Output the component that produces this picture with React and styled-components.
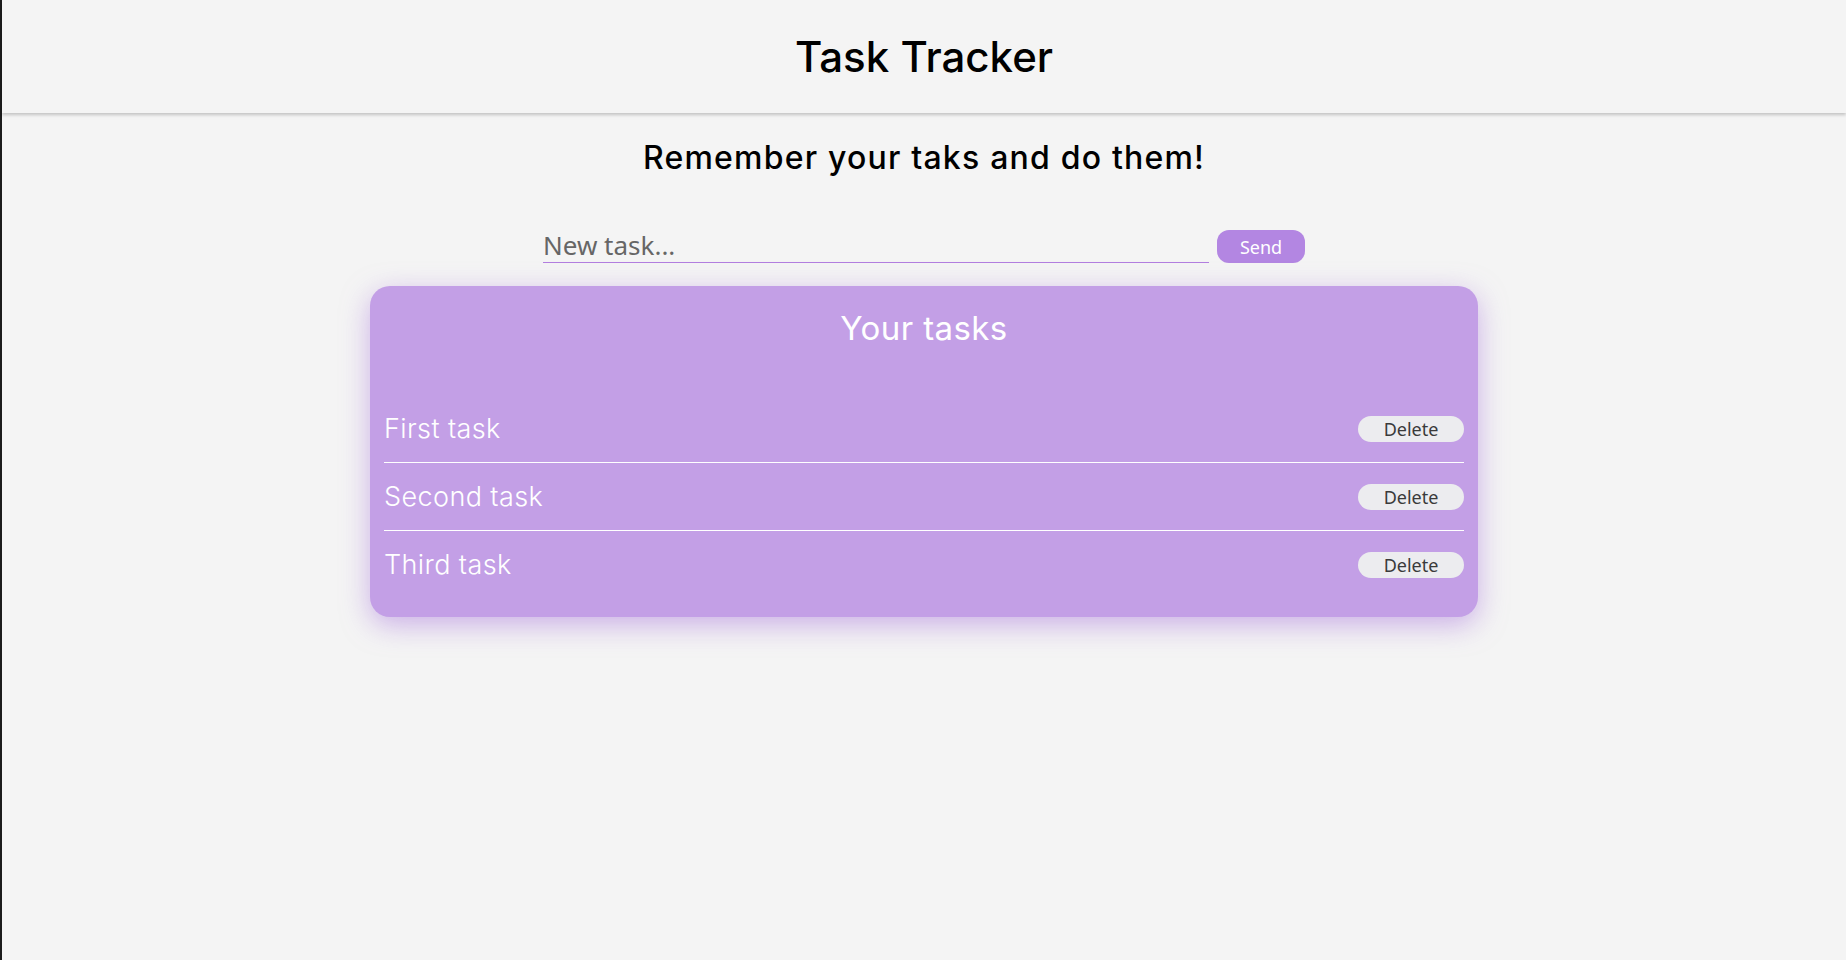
import React, { useState } from "react";
import styled, { createGlobalStyle } from "styled-components";

const GlobalStyle = createGlobalStyle`
  * {
    box-sizing: border-box;
  }
  body {
    margin: 0;
    background: #f4f4f4;
    font-family: "Inter", "Open Sans", sans-serif;
  }
`;

const Page = styled.div`
  min-height: 100vh;
  border-left: 2px solid #1c1c1c;
  display: flex;
  flex-direction: column;
  align-items: center;
`;

const Header = styled.header`
  align-self: stretch;
  height: 113px;
  display: flex;
  align-items: center;
  justify-content: center;
  box-shadow: 0 2px 3px rgba(0, 0, 0, 0.2);
`;

const Title = styled.h1`
  margin: 0;
  font-size: 42px;
  font-weight: 500;
  color: #000;
`;

const Subtitle = styled.h2`
  margin: 21px 0 0;
  font-size: 32px;
  line-height: 48px;
  letter-spacing: 1.2px;
  font-weight: 500;
  color: #000;
`;

const Form = styled.form`
  margin-top: 48px;
  display: flex;
  align-items: flex-end;
  gap: 8px;
`;

const TaskInput = styled.input`
  width: 666px;
  height: 32px;
  padding: 0 0 4px;
  border: none;
  border-bottom: 1px solid #b37fe0;
  background: transparent;
  font-family: "Noto Sans", "Open Sans", sans-serif;
  font-size: 26px;
  line-height: 28px;
  color: #555;
  outline: none;
  &::placeholder {
    color: #666;
  }
`;

const Pill = styled.button`
  border: none;
  font-family: "Noto Sans", "Open Sans", sans-serif;
  cursor: pointer;
  background: ${p => (p.primary ? "#b386e2" : "#ececef")};
  color: ${p => (p.primary ? "#fff" : "#3a3a3a")};
  width: ${p => (p.primary ? "88px" : "106px")};
  height: ${p => (p.primary ? "33px" : "26px")};
  border-radius: ${p => (p.primary ? "12px" : "13px")};
  font-size: 18px;
  padding: 0;
`;

const Card = styled.section`
  margin-top: 23px;
  width: 1108px;
  padding: 18px 14px 19px;
  border-radius: 20px;
  background: #c39fe6;
  box-shadow: 0 8px 28px rgba(170, 120, 220, 0.55);
`;

const CardTitle = styled.h3`
  margin: 0 0 43px;
  text-align: center;
  font-size: 33px;
  line-height: 48px;
  letter-spacing: 0.4px;
  font-weight: 400;
  color: #fff;
`;

const TaskList = styled.ul`
  list-style: none;
  margin: 0;
  padding: 0;
`;

const TaskRow = styled.li`
  height: 68px;
  display: flex;
  align-items: center;
  justify-content: space-between;
  border-bottom: 1px solid #fff;
  &:last-child {
    border-bottom: none;
    height: 67px;
  }
`;

const TaskName = styled.span`
  font-size: 27px;
  letter-spacing: 0.4px;
  font-weight: 300;
  color: #fff;
`;

export default function App() {
  const [tasks, setTasks] = useState(["First task", "Second task", "Third task"]);
  const [text, setText] = useState("");

  const addTask = e => {
    e.preventDefault();
    if (!text.trim()) return;
    setTasks([...tasks, text.trim()]);
    setText("");
  };

  return (
    <Page>
      <GlobalStyle />
      <Header>
        <Title>Task Tracker</Title>
      </Header>
      <Subtitle>Remember your taks and do them!</Subtitle>
      <Form onSubmit={addTask}>
        <TaskInput
          placeholder="New task..."
          value={text}
          onChange={e => setText(e.target.value)}
        />
        <Pill primary type="submit">
          Send
        </Pill>
      </Form>
      <Card>
        <CardTitle>Your tasks</CardTitle>
        <TaskList>
          {tasks.map((task, i) => (
            <TaskRow key={i}>
              <TaskName>{task}</TaskName>
              <Pill
                type="button"
                onClick={() => setTasks(tasks.filter((_, j) => j !== i))}
              >
                Delete
              </Pill>
            </TaskRow>
          ))}
        </TaskList>
      </Card>
    </Page>
  );
}
